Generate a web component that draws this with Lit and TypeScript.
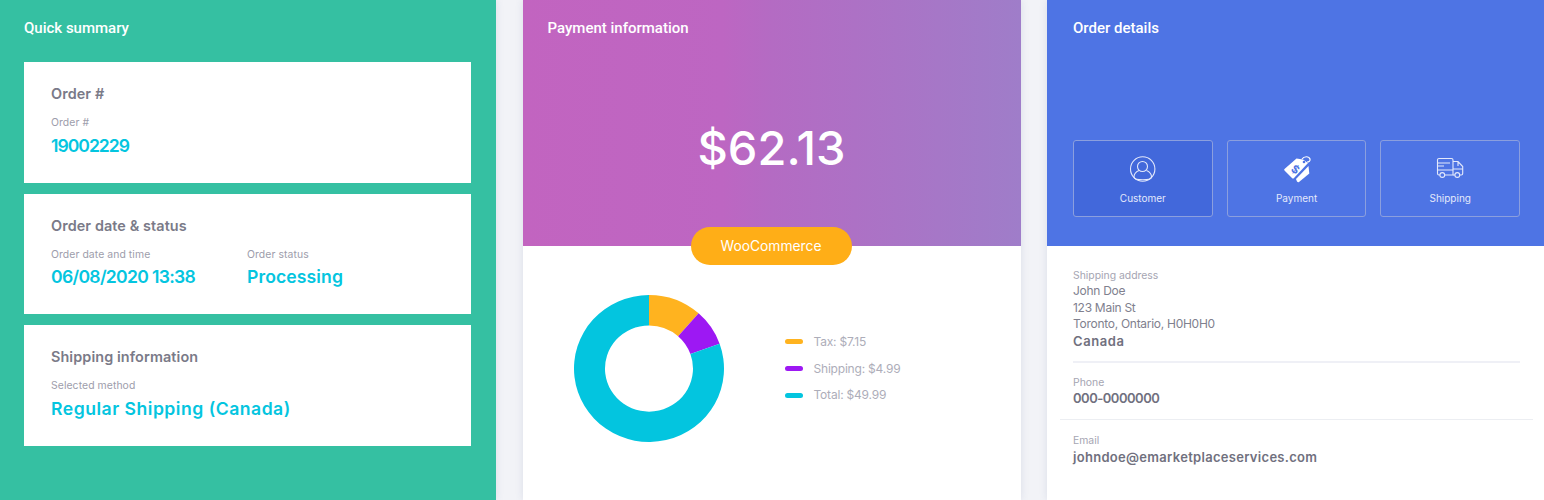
import { LitElement, html, css } from "lit";
import { customElement } from "lit/decorators.js";

function sector(cx: number, cy: number, r0: number, r1: number, a0: number, a1: number) {
  const p = (r: number, a: number) => {
    const t = (a - 90) * Math.PI / 180;
    return `${(cx + r * Math.cos(t)).toFixed(2)} ${(cy + r * Math.sin(t)).toFixed(2)}`;
  };
  const large = a1 - a0 > 180 ? 1 : 0;
  return `M${p(r1, a0)}A${r1} ${r1} 0 ${large} 1 ${p(r1, a1)}L${p(r0, a1)}A${r0} ${r0} 0 ${large} 0 ${p(r0, a0)}Z`;
}

@customElement("app-root")
export class AppRoot extends LitElement {
  static styles = css`
    :host { display: block; width: 1544px; height: 500px; overflow: hidden; font-family: "Inter", "Noto Sans", sans-serif; }
    .page { display: grid; grid-template-columns: 496px 498px 497px; column-gap: 26.5px; height: 500px; background: #f2f3f7; }
    section { box-shadow: 0 0 8px rgba(60, 70, 130, 0.12); }
    .title { font: 500 15px/20px Roboto, sans-serif; color: #fff; }
    .summary { background: #35c0a2; padding: 18px 25px 0 24px; }
    .cards { display: flex; flex-direction: column; gap: 11px; margin-top: 24px; }
    .card { background: #fff; height: 120.6px; box-sizing: border-box; padding: 23px 27px 0; }
    .h { font-size: 14.4px; line-height: 18px; font-weight: 600; color: #7a7a88; letter-spacing: 0.1px; }
    .lab { font-size: 10.4px; line-height: 14px; color: #9d9dab; margin-top: 13px; letter-spacing: 0.08px; }
    .val { font-size: 17.6px; line-height: 24px; font-weight: 600; color: #04c5df; margin-top: 3.5px; white-space: nowrap; }
    .order { letter-spacing: -1px; }
    .date { letter-spacing: -0.7px; }
    .status { letter-spacing: 0.1px; }
    .method { letter-spacing: 0.5px; }
    .two { display: grid; grid-template-columns: 196px 1fr; }
    .payment { background: #fff; display: flex; flex-direction: column; position: relative; }
    .phead { height: 246px; box-sizing: border-box; padding: 18px 25px 0; background: linear-gradient(90deg, #c264c0 0%, #bd66c2 40%, #b46bc3 50%, #9f7dc9 100%); }
    .amount { font-size: 47px; line-height: 56px; font-weight: 500; color: #fff; text-align: center; margin-top: 82px; }
    .pill { position: absolute; left: 168px; top: 227px; width: 161px; height: 38px; box-sizing: border-box; padding-bottom: 1px; border-radius: 19px; background: #ffae17; color: #fff; font-size: 13.8px; font-weight: 400; display: flex; align-items: center; justify-content: center; }
    .chart { display: flex; align-items: center; padding: 49px 0 0 51px; }
    .chart svg { display: block; }
    .legend { display: flex; flex-direction: column; gap: 8.7px; margin-left: 61px; }
    .li { display: flex; align-items: center; gap: 11px; font-size: 12px; line-height: 18px; color: #adadb9; letter-spacing: -0.2px; }
    .sw { width: 18px; height: 5px; border-radius: 3px; }
    .tax { background: #ffb31f; }
    .ship { background: #9d18f3; }
    .total { background: #03c5df; }
    .details { background: #fff; display: flex; flex-direction: column; }
    .dhead { height: 246px; box-sizing: border-box; padding: 18px 24px 0 26px; background: #4e74e4; display: flex; flex-direction: column; }
    .tabs { display: grid; grid-template-columns: repeat(3, 139.7px); column-gap: 14px; margin-top: 102px; }
    .tab { height: 77px; box-sizing: border-box; border: 1px solid #8b9fde; border-radius: 3px; display: flex; flex-direction: column; align-items: center; padding-top: 14px; color: #e4e9fb; font-size: 10px; line-height: 14px; }
    .tab svg { display: block; width: 28px; height: 26px; margin-bottom: 10px; overflow: visible; }
    .tab.on { background: #4268db; }
    .dbody { padding: 23px 24px 0 26px; }
    .dlab { font-size: 10.4px; line-height: 14px; color: #a5a5b2; }
    .addr { font-size: 12px; line-height: 16.7px; color: #80808e; letter-spacing: -0.28px; }
    .strong { font-size: 13px; line-height: 17px; font-weight: 600; color: #70707e; }
    .country { letter-spacing: 0.6px; }
    .phone { letter-spacing: -0.5px; }
    .email { letter-spacing: 0.3px; margin-top: 1px; }
    .sep { height: 2px; background: #eff0f6; margin: 11px 0 13px; }
    .sep2 { height: 1px; background: #eceef2; margin: 12px -13px 14px; }
  `;

  render() {
    return html`<div class="page">
      <section class="summary">
        <div class="title">Quick summary</div>
        <div class="cards">
          <div class="card"><div class="h">Order #</div><div class="lab">Order #</div><div class="val order">19002229</div></div>
          <div class="card"><div class="h">Order date &amp; status</div>
            <div class="two">
              <div><div class="lab">Order date and time</div><div class="val date">06/08/2020 13:38</div></div>
              <div><div class="lab">Order status</div><div class="val status">Processing</div></div>
            </div>
          </div>
          <div class="card"><div class="h">Shipping information</div><div class="lab">Selected method</div><div class="val method">Regular Shipping (Canada)</div></div>
        </div>
      </section>
      <section class="payment">
        <div class="phead"><div class="title">Payment information</div><div class="amount">$62.13</div></div>
        <div class="pill">WooCommerce</div>
        <div class="chart">
          <svg width="150" height="147" viewBox="0 0 150 150" preserveAspectRatio="none">
            <path fill="#ffb31f" d="${sector(75, 75, 44, 75, 0, 41.4)}"/>
            <path fill="#9d18f3" d="${sector(75, 75, 44, 75, 41.4, 70.3)}"/>
            <path fill="#03c5df" d="${sector(75, 75, 44, 75, 70.3, 360)}"/>
          </svg>
          <div class="legend">
            <div class="li"><span class="sw tax"></span>Tax: $7.15</div>
            <div class="li"><span class="sw ship"></span>Shipping: $4.99</div>
            <div class="li"><span class="sw total"></span>Total: $49.99</div>
          </div>
        </div>
      </section>
      <section class="details">
        <div class="dhead">
          <div class="title">Order details</div>
          <div class="tabs">
            <div class="tab on">
              <svg viewBox="0 0 28 26" fill="none" stroke="#e4e9fb" stroke-width="1.1">
                <circle cx="13.7" cy="14" r="12.2"/>
                <circle cx="13.5" cy="11.5" r="5"/>
                <path d="M10 15.500C6.500 17 5 20 5 22c0 1.800 4 2.800 8.700 2.800S22.500 23.800 22.500 22c0-2-1.500-5-5-6.500"/>
              </svg>
              Customer
            </div>
            <div class="tab">
              <svg viewBox="0 0 28 26">
                <path fill="#fff" d="M1.500 14 13.500 3.500l6.500 1 5 3.500L11 23q-1 1-2 0l-7.500-7.500q-.8-.8 0-1.500z"/>
                <path fill="#fff" d="M13 24 25.500 11l.8 7.500L16 27q-1 .6-2-.5z"/>
                <path fill="none" stroke="#fff" stroke-width="1.200" d="M19 4c2-3 7-3 8 0 .5 2-1 3-3 3"/>
                <circle cx="21" cy="7" r="1.300" fill="#4e74e4"/>
                <text x="9" y="18" font-size="11" font-weight="700" fill="#4e74e4" transform="rotate(35 12 14)">$</text>
              </svg>
              Payment
            </div>
            <div class="tab">
              <svg viewBox="0 0 28 26" fill="none" stroke="#e4e9fb" stroke-width="1.1">
                <path d="M3.900 20H3a1.500 1.500 0 0 1-1.500-1.500V5A1.500 1.500 0 0 1 3 3.500h12.500A1.500 1.500 0 0 1 17 5v15H8.700"/>
                <path d="M17 6.500h5l4.700 5V18.500a1.500 1.500 0 0 1-1.500 1.500h-1.500M18.900 20H17M1.500 15H17M17 14h9.700M22 6.500V11M1.500 8H14M1.500 11H8"/>
                <circle cx="6.300" cy="20" r="2.400"/>
                <circle cx="21.300" cy="20" r="2.400"/>
              </svg>
              Shipping
            </div>
          </div>
        </div>
        <div class="dbody">
          <div class="dlab">Shipping address</div>
          <div class="addr">John Doe<br/>123 Main St<br/>Toronto, Ontario, H0H0H0</div>
          <div class="strong country">Canada</div>
          <div class="sep"></div>
          <div class="dlab">Phone</div>
          <div class="strong phone">000-0000000</div>
          <div class="sep2"></div>
          <div class="dlab">Email</div>
          <div class="strong email">johndoe@emarketplaceservices.com</div>
        </div>
      </section>
    </div>`;
  }
}
